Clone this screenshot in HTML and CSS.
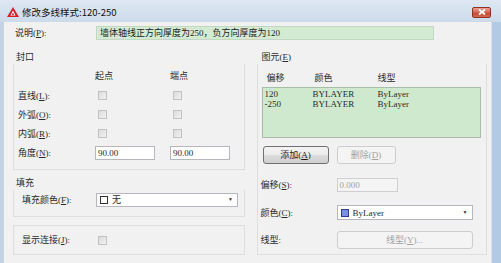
FILE: index.html
```html
<!DOCTYPE html>
<html lang="zh-CN">
  <head>
    <meta charset="UTF-8" />
    <title>修改多线样式:120-250</title>
    <link rel="stylesheet" href="styles.css">
  </head>
  <body>
    <div class="window">
      <div class="titlebar">
        <svg class="app-icon" width="12" height="10" viewBox="0 0 12 10">
          <path d="M6 0 L12 10 L0 10 Z" fill="#d4202c"/>
          <path d="M6 3.5 L8.6 8.6 L3.4 8.6 Z" fill="#fff"/>
          <path d="M6 5.6 L7.2 8 L4.8 8 Z" fill="#d4202c"/>
        </svg>
        <span class="title">修改多线样式:120-250</span>
        <div class="close-btn">
          <svg width="8" height="6" viewBox="0 0 8 6">
            <path d="M1 0.5 L7 5.5 M7 0.5 L1 5.5" stroke="#fff" stroke-width="1.8"/>
          </svg>
        </div>
      </div>

      <div class="client">
        <div class="desc-row">
          <span class="desc-label">说明(<u>P</u>):</span>
          <div class="desc-field">墙体轴线正方向厚度为250，负方向厚度为120</div>
        </div>

        <div class="columns">
          <div class="col">
            <div class="group-label">封口</div>
            <div class="group-box caps">
              <span></span>
              <span class="col-head">起点</span>
              <span class="col-head">端点</span>

              <span class="row-label">直线(<u>L</u>):</span>
              <span class="check"></span>
              <span class="check"></span>

              <span class="row-label">外弧(<u>O</u>):</span>
              <span class="check"></span>
              <span class="check"></span>

              <span class="row-label">内弧(<u>R</u>):</span>
              <span class="check"></span>
              <span class="check"></span>

              <span class="row-label">角度(<u>N</u>):</span>
              <span class="text-input">90.00</span>
              <span class="text-input">90.00</span>
            </div>

            <div class="group-label spaced">填充</div>
            <div class="group-box fill">
              <span class="row-label wide">填充颜色(<u>F</u>):</span>
              <div class="combo fill-combo">
                <span class="swatch none"></span>
                <span class="combo-text">无</span>
                <span class="arrow">▼</span>
              </div>
            </div>

            <div class="group-box joint">
              <span class="row-label wide">显示连接(<u>J</u>):</span>
              <span class="check"></span>
            </div>
          </div>

          <div class="col">
            <div class="group-label right">图元(<u>E</u>)</div>
            <div class="group-box elements">
              <div class="list-head">
                <span>偏移</span>
                <span>颜色</span>
                <span>线型</span>
              </div>
              <div class="list">
                <div class="list-row"><span>120</span><span>BYLAYER</span><span>ByLayer</span></div>
                <div class="list-row"><span>-250</span><span>BYLAYER</span><span>ByLayer</span></div>
              </div>
              <div class="button-row">
                <button class="btn add">添加(<u>A</u>)</button>
                <button class="btn del" disabled>删除(<u>D</u>)</button>
              </div>

              <div class="prop-row offset-row">
                <span class="prop-label">偏移(<u>S</u>):</span>
                <span class="text-input disabled offset">0.000</span>
              </div>
              <div class="prop-row color-row">
                <span class="prop-label">颜色(<u>C</u>):</span>
                <div class="combo color-combo">
                  <span class="swatch blue"></span>
                  <span class="combo-text">ByLayer</span>
                  <span class="arrow">▼</span>
                </div>
              </div>
              <div class="prop-row type-row">
                <span class="prop-label">线型:</span>
                <button class="btn wide-btn" disabled>线型(<u>Y</u>)...</button>
              </div>
            </div>
          </div>
        </div>
      </div>
    </div>
  </body>
</html>
```

FILE: styles.css
```css
* {
  box-sizing: border-box;
}

body {
  margin: 0;
  font-family: "Liberation Serif", "Noto Sans CJK SC", serif;
  font-size: 9px;
  line-height: 12px;
  color: #2a2a2a;
  background: #fff;
}

.window {
  width: 501px;
  height: 263px;
  overflow: hidden;
  display: flex;
  flex-direction: column;
  background: linear-gradient(90deg, #c4d3e4 0, #c4d3e4 4px, #b3cae4 4px);
}

/* title bar */
.titlebar {
  height: 22px;
  flex: none;
  display: flex;
  align-items: center;
  padding: 2px 10px 0 7px;
  background: linear-gradient(#dfe8f3, #ccdaea);
}

.app-icon {
  margin-right: 3px;
}

.title {
  flex: 1;
  font-family: "Noto Sans CJK SC", sans-serif;
  font-size: 9.5px;
  color: #111;
}

.close-btn {
  width: 19px;
  height: 11px;
  display: flex;
  align-items: center;
  justify-content: center;
  border: 1px solid #8b3427;
  border-radius: 2px;
  background: linear-gradient(#e8a396, #d0624f 50%, #c2432f 51%, #cf6a4f);
}

/* client area */
.client {
  flex: 1;
  margin: 0 9px 0 4px;
  padding: 4px 4px 0 6px;
  background: #f1f1f1;
  border-right: 1px solid #d9e3ee;
}

.desc-row {
  display: flex;
  align-items: center;
  height: 14px;
}

.desc-label {
  width: 86px;
  padding-left: 5px;
}

.desc-field {
  width: 338px;
  height: 14px;
  padding: 0 3px;
  line-height: 13px;
  background: #d3ebd3;
  border: 1px solid #c3d7c3;
  color: #222;
}

.columns {
  display: flex;
  gap: 8px;
  margin-top: 10px;
}

.col {
  width: 235px;
  display: flex;
  flex-direction: column;
}

.group-label {
  height: 14px;
  line-height: 14px;
  padding-left: 6px;
}

.group-label.spaced {
  margin-top: 6px;
}

.group-label.right {
  padding-left: 9px;
}

.group-box {
  margin-left: 3px;
  border: 1px solid #dedede;
  border-top: none;
}

/* caps */
.caps {
  height: 106px;
  display: grid;
  grid-template-columns: 77px 75px 61px;
  grid-template-rows: 16px repeat(4, 19px);
  align-items: center;
  padding: 6px 0 0 4px;
}

.caps .col-head {
  align-self: start;
}

.row-label {
  white-space: nowrap;
}

.check {
  width: 9px;
  height: 9px;
  margin-left: 3px;
  border: 1px solid #c2c2c2;
  background: linear-gradient(135deg, #dcdcdc, #f1f1f1);
}

.text-input {
  width: 60px;
  height: 14px;
  padding-left: 2px;
  line-height: 12px;
  background: #fff;
  border: 1px solid #b5b7bd;
}

.text-input.disabled {
  background: #f4f4f4;
  border-color: #cfcfcf;
  color: #a2a2a2;
}

/* fill */
.fill {
  height: 27px;
  display: flex;
  align-items: flex-start;
  padding: 3px 0 0 8px;
}

.row-label.wide {
  width: 74px;
  line-height: 14px;
}

.combo {
  display: flex;
  align-items: center;
  height: 14px;
  background: #fff;
  border: 1px solid #b5b7bd;
  padding: 0 4px 0 3px;
}

.fill-combo {
  width: 142px;
}

.swatch {
  width: 8px;
  height: 8px;
  margin-right: 4px;
  flex: none;
}

.swatch.none {
  border: 1px solid #333;
  background: #fff;
}

.swatch.blue {
  border: 1px solid #2d3f8f;
  background: #7b8fe0;
}

.combo-text {
  flex: 1;
  line-height: 12px;
}

.arrow {
  font-size: 5px;
  color: #333;
  line-height: 6px;
}

/* joint */
.joint {
  height: 30px;
  margin-top: 8px;
  border-top: 1px solid #dedede;
  display: flex;
  align-items: center;
  padding-left: 8px;
}

.joint .check {
  margin-left: 2px;
}

/* elements */
.elements {
  margin-left: 4px;
  height: 191px;
  padding: 8px 0 0 4px;
}

.list-head {
  display: grid;
  grid-template-columns: 48px 63px auto;
  padding-left: 5px;
  height: 12px;
}

.list {
  margin-top: 3px;
  width: 219px;
  height: 51px;
  padding: 1px 0 0 2px;
  background: #cfe9cf;
  border: 1px solid #a9bea9;
}

.list-row {
  display: grid;
  grid-template-columns: 48px 65px auto;
  line-height: 10px;
}

.button-row {
  display: flex;
  gap: 8px;
  margin-top: 8px;
  padding-left: 1px;
}

.btn {
  height: 18px;
  padding: 0;
  font: inherit;
  color: #1e1e1e;
  border: 1px solid #707070;
  border-radius: 3px;
  background: linear-gradient(#f3f3f3, #ebebeb 50%, #dddddd 51%, #cfcfcf);
}

.btn:disabled {
  color: #a3a3a3;
  border-color: #cdcdcd;
  background: #f4f4f4;
}

.btn.add {
  width: 66px;
}

.btn.del {
  width: 59px;
}

.prop-row {
  display: flex;
  align-items: center;
  margin-left: -1px;
}

.prop-label {
  width: 76px;
}

.offset-row {
  margin-top: 14px;
}

.color-row {
  margin-top: 13px;
}

.type-row {
  margin-top: 11px;
}

.text-input.offset {
  width: 61px;
}

.color-combo {
  width: 136px;
  height: 15px;
}

.wide-btn {
  width: 136px;
}
```
